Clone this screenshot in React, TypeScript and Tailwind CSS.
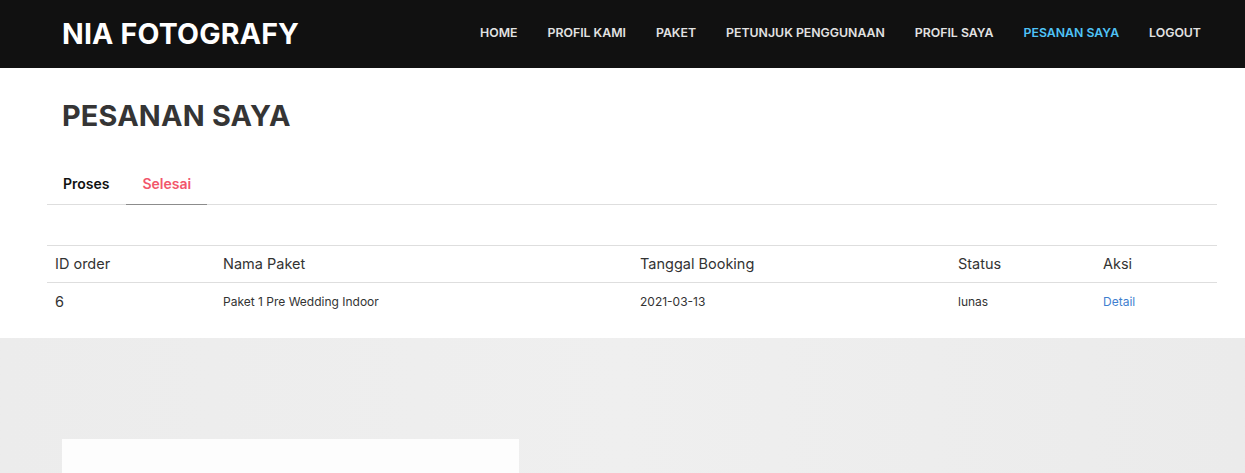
import React from "react";

const font = { fontFamily: "Inter, 'Open Sans', 'Liberation Sans', sans-serif" };

export default function App() {
  const nav = ["HOME", "PROFIL KAMI", "PAKET", "PETUNJUK PENGGUNAAN", "PROFIL SAYA", "PESANAN SAYA", "LOGOUT"];
  return (
    <div className="w-[1245px] h-[473px] overflow-hidden bg-white" style={font}>
      <header className="h-[68px] bg-[#111111] flex items-center justify-between pl-[62px] pr-[44px]">
        <div className="text-white text-[28.5px] font-bold leading-none tracking-[0.2px]">NIA FOTOGRAFY</div>
        <nav className="flex items-center gap-[30px] pb-px">
          {nav.map((n) => (
            <a
              key={n}
              className={
                "text-[12.3px] font-semibold leading-none " +
                (n === "PESANAN SAYA" ? "text-[#4fc3f7]" : "text-[#e2e2e2]")
              }
            >
              {n}
            </a>
          ))}
        </nav>
      </header>

      <section className="bg-white h-[270px] pl-[47px] pr-[28px]">
        <h1 className="pt-[30px] pl-[15px] text-[28.8px] font-bold leading-[36px] text-[#353535] tracking-[0.2px]">
          PESANAN SAYA
        </h1>
        <div className="mt-[41px] flex border-b border-[#dedede]">
          <div className="px-4 pb-[12px] text-[14px] font-semibold text-[#111] leading-[17px]">Proses</div>
          <div className="px-4 pb-[12px] text-[14px] font-semibold text-[#f2566b] leading-[17px] border-b border-[#8c8c8c] -mb-px ml-px">
            Selesai
          </div>
        </div>
        <div className="mt-[40px] border-t border-[#dedede]">
          <div className="grid grid-cols-[168px_417px_318px_145px_122px] border-b border-[#dedede] h-[37px] items-center text-[14.5px] text-[#333]">
            <div className="pl-2">ID order</div>
            <div className="pl-2">Nama Paket</div>
            <div className="pl-2">Tanggal Booking</div>
            <div className="pl-2">Status</div>
            <div className="pl-2">Aksi</div>
          </div>
          <div className="grid grid-cols-[168px_417px_318px_145px_122px] h-[37px] items-center text-[12px] text-[#333]">
            <div className="pl-2 text-[14.5px]">6</div>
            <div className="pl-2">Paket 1 Pre Wedding Indoor</div>
            <div className="pl-2">2021-03-13</div>
            <div className="pl-2">lunas</div>
            <div className="pl-2 text-[#3f7fcf]">Detail</div>
          </div>
        </div>
      </section>

      <section className="h-[135px] bg-gradient-to-r from-[#ececec] via-[#efefef] to-[#ebebeb] pt-[101px] pl-[62px]">
        <div className="w-[457px] h-[40px] bg-[#fdfdfd]"></div>
      </section>
    </div>
  );
}
